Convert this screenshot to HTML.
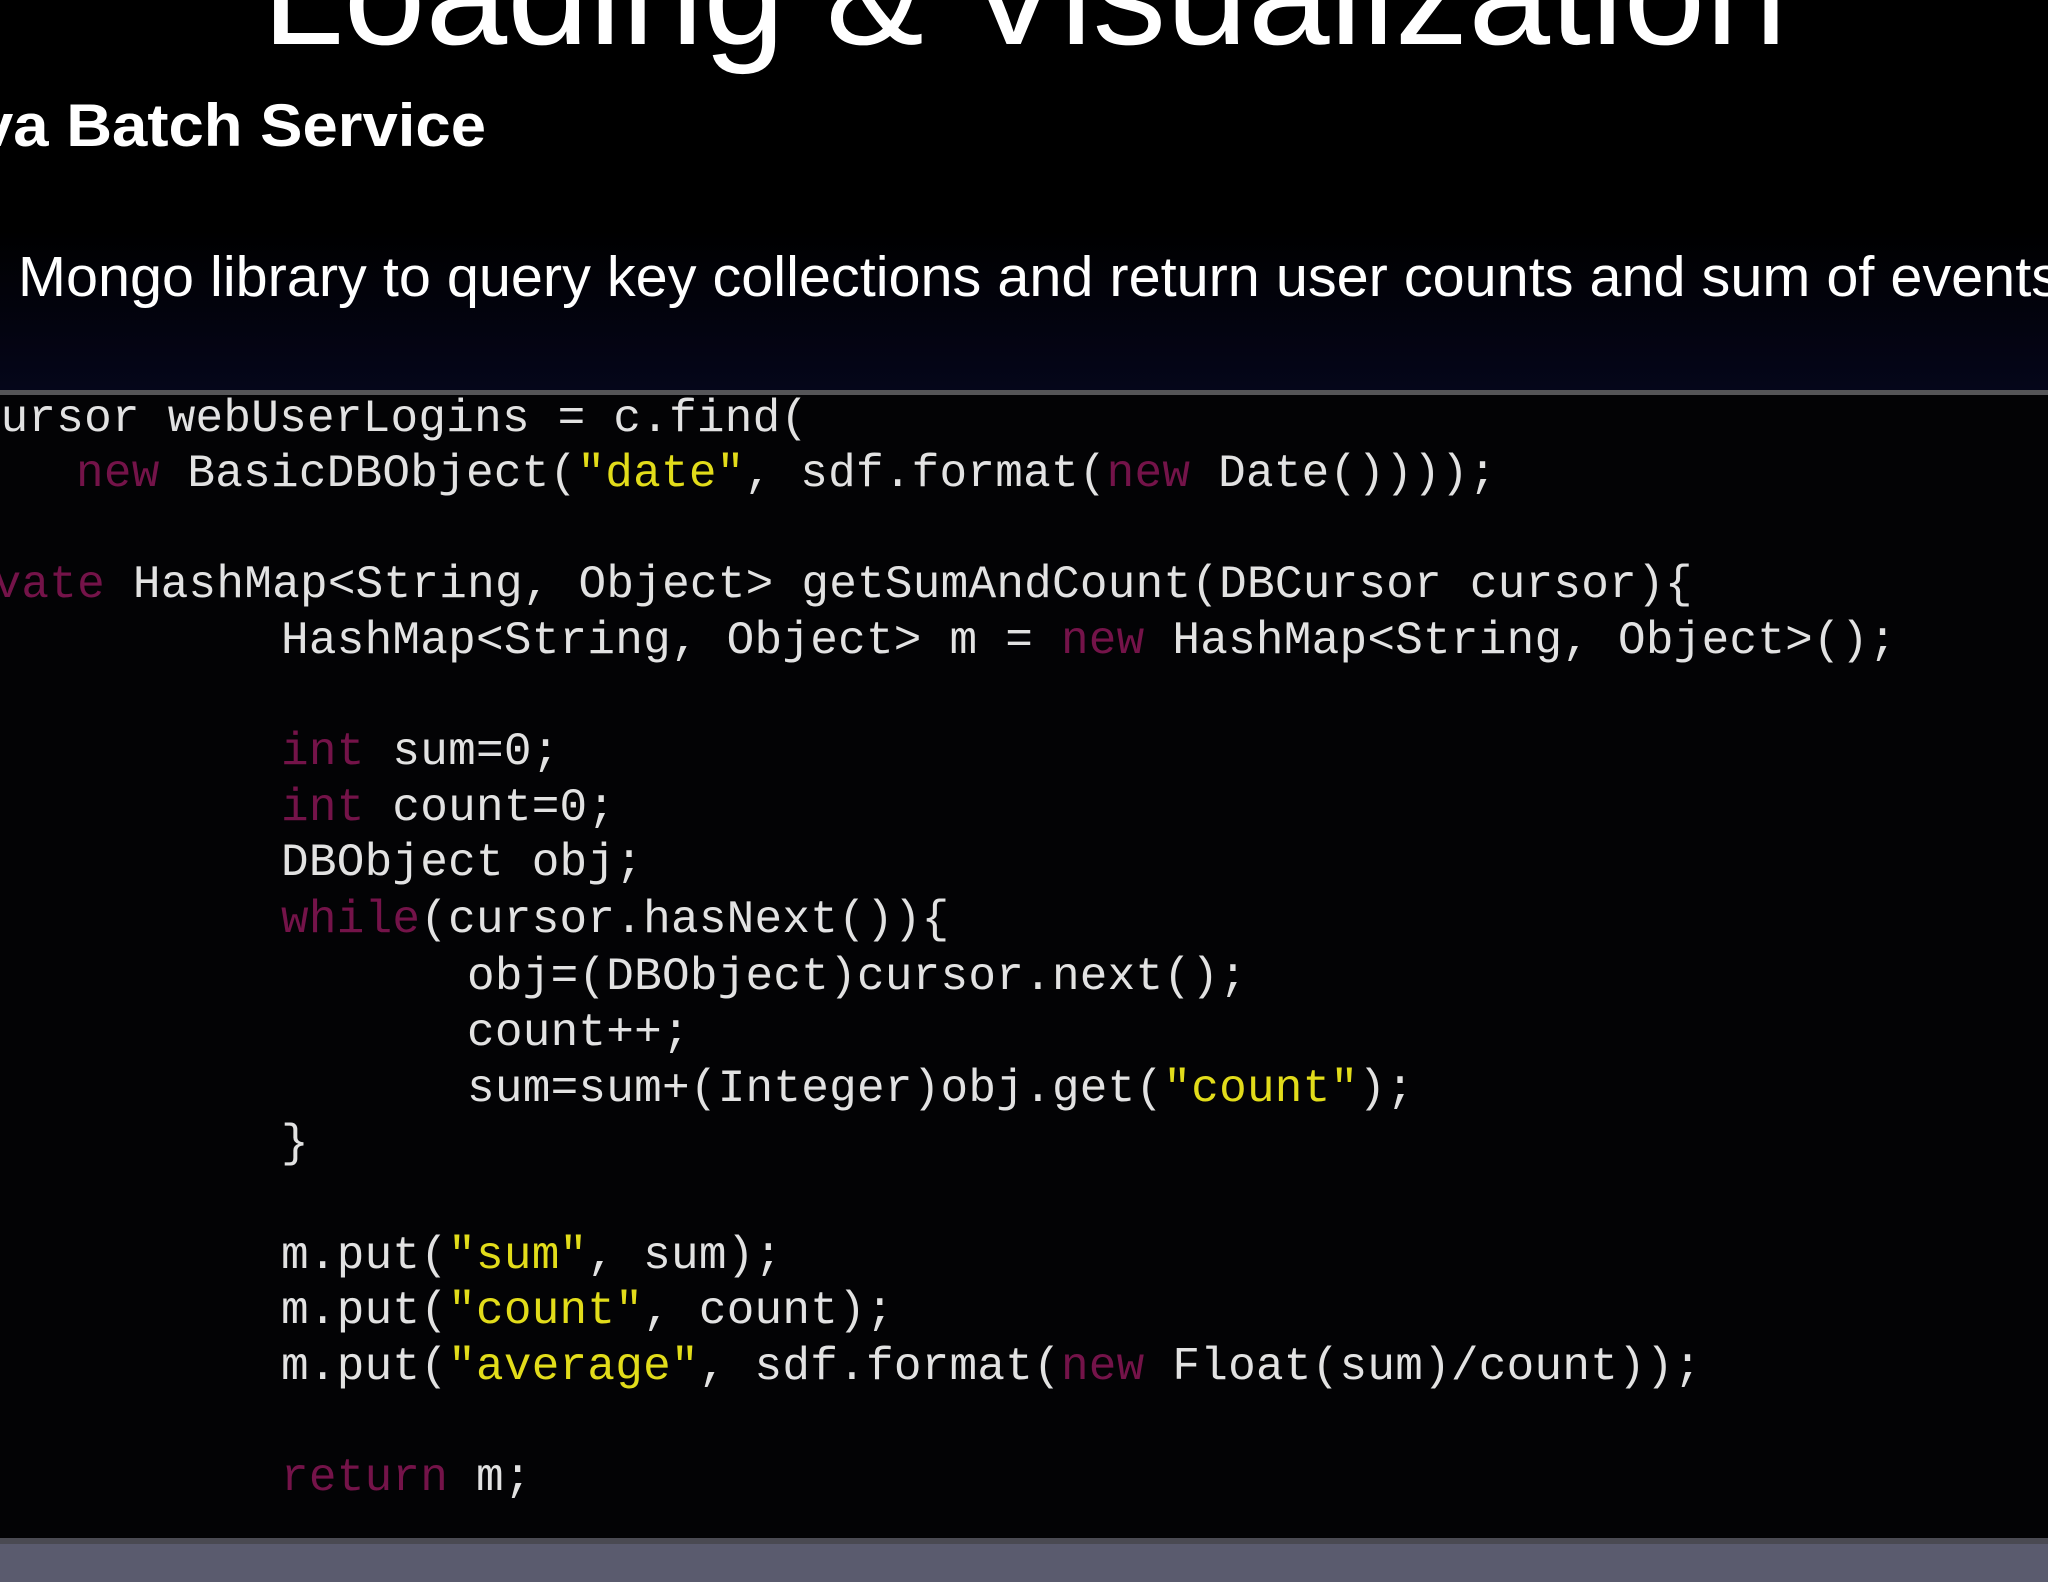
<!DOCTYPE html>
<html><head><meta charset="utf-8"><style>
html,body{margin:0;padding:0;}
body{width:2048px;height:1582px;position:relative;overflow:hidden;background:#000;}
.hdr{position:absolute;left:0;top:0;width:2048px;height:390px;background:linear-gradient(#000 0,#000 230px,#05061a 390px);}
.rule{position:absolute;left:0;top:390px;width:2048px;height:5px;background:#555558;}
.code{position:absolute;left:0;top:395px;width:2048px;height:1143px;background:#030305;}
.foot{position:absolute;left:0;top:1538px;width:2048px;height:44px;background:#5a5b6e;}
.foot:before{content:"";position:absolute;left:0;top:0;width:100%;height:6px;background:#4a4a52;}
.l{position:absolute;font-family:"Liberation Mono",monospace;font-size:46px;letter-spacing:0.25px;line-height:56px;height:56px;white-space:pre;color:#e2e2e2;}
.k{color:#741349;}
.s{color:#e2dc1a;}
svg{position:absolute;left:0;top:0;}
</style></head><body>
<div class="hdr"></div>
<div class="rule"></div>
<div class="code"></div>
<div class="foot"></div>
<svg width="2048" height="400">
<text x="262" y="44" font-family="Liberation Sans, sans-serif" font-size="145" fill="#fff" textLength="1525" lengthAdjust="spacingAndGlyphs">Loading &amp; Visualization</text>
<text x="-22" y="146" font-family="Liberation Sans, sans-serif" font-weight="bold" font-size="60" fill="#fff" textLength="508" lengthAdjust="spacingAndGlyphs">va Batch Service</text>
<text x="18" y="296" font-family="Liberation Sans, sans-serif" font-size="57" fill="#fff" textLength="2042" lengthAdjust="spacingAndGlyphs">Mongo library to query key collections and return user counts and sum of events</text>
</svg>
<div class="l" style="left:-83px;top:391px">DBCursor webUserLogins = c.find(</div>
<div class="l" style="left:76px;top:446px"><span class="k">new</span> BasicDBObject(<span class="s">"date"</span>, sdf.format(<span class="k">new</span> Date())));</div>
<div class="l" style="left:-90px;top:557px"><span class="k">private</span> HashMap&lt;String, Object&gt; getSumAndCount(DBCursor cursor){</div>
<div class="l" style="left:281px;top:613px">HashMap&lt;String, Object&gt; m = <span class="k">new</span> HashMap&lt;String, Object&gt;();</div>
<div class="l" style="left:281px;top:724px"><span class="k">int</span> sum=0;</div>
<div class="l" style="left:281px;top:780px"><span class="k">int</span> count=0;</div>
<div class="l" style="left:281px;top:835px">DBObject obj;</div>
<div class="l" style="left:281px;top:892px"><span class="k">while</span>(cursor.hasNext()){</div>
<div class="l" style="left:467px;top:949px">obj=(DBObject)cursor.next();</div>
<div class="l" style="left:467px;top:1005px">count++;</div>
<div class="l" style="left:467px;top:1061px">sum=sum+(Integer)obj.get(<span class="s">"count"</span>);</div>
<div class="l" style="left:281px;top:1116px">}</div>
<div class="l" style="left:281px;top:1228px">m.put(<span class="s">"sum"</span>, sum);</div>
<div class="l" style="left:281px;top:1283px">m.put(<span class="s">"count"</span>, count);</div>
<div class="l" style="left:281px;top:1339px">m.put(<span class="s">"average"</span>, sdf.format(<span class="k">new</span> Float(sum)/count));</div>
<div class="l" style="left:281px;top:1450px"><span class="k">return</span> m;</div>
</body></html>
